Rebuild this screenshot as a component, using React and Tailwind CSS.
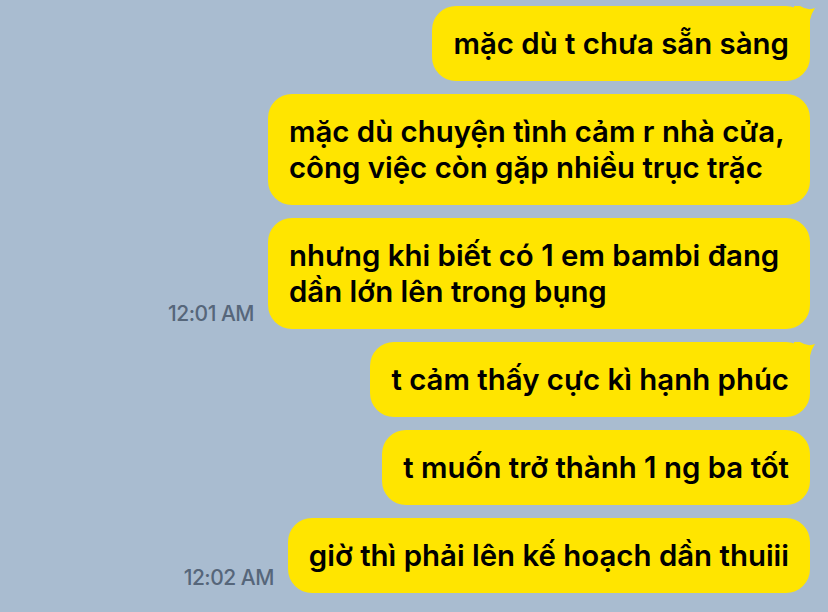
import React from "react"

const messages = [
  { lines: ["mặc dù t chưa sẵn sàng"], tail: true },
  { lines: ["mặc dù chuyện tình cảm r nhà cửa,", "công việc còn gặp nhiều trục trặc"], wide: true },
  { lines: ["nhưng khi biết có 1 em bambi đang", "dần lớn lên trong bụng"], wide: true, time: "12:01 AM" },
  { lines: ["t cảm thấy cực kì hạnh phúc"], tail: true },
  { lines: ["t muốn trở thành 1 ng ba tốt"] },
  { lines: ["giờ thì phải lên kế hoạch dần thuiii"], time: "12:02 AM" },
]

function Tail() {
  return (
    <svg className="absolute -right-[6px] top-0" width="22" height="30" viewBox="0 0 22 30">
      <path d="M0 0 L6 0 Q14 5 21 2 Q17 8 16 14 L16 30 L0 30 Z" fill="#ffe500" />
    </svg>
  )
}

function Bubble({ lines, tail, wide }) {
  return (
    <div className={`relative rounded-[24px] bg-[#ffe500] px-[21px] pt-[20px] pb-[19px] ${wide ? "w-[542px]" : ""}`}>
      {tail && <Tail />}
      <p className="relative text-[29.4px] leading-[36px] font-semibold text-black whitespace-nowrap">
        {lines.map((l, i) => (
          <span key={i} className="block">{l}</span>
        ))}
      </p>
    </div>
  )
}

export default function App() {
  return (
    <div className="w-[828px] h-[612px] overflow-hidden bg-[#a9bcd0] font-['Inter','Noto_Sans',sans-serif]">
      <div className="flex flex-col items-end gap-[13px] pt-[6px] pr-[18px]">
        {messages.map((m, i) => (
          <div key={i} className="flex items-end gap-[14px]">
            {m.time && (
              <span className="mb-[3px] text-[21px] leading-[24px] font-medium text-[#56667a] tracking-[-0.5px]">{m.time}</span>
            )}
            <Bubble {...m} />
          </div>
        ))}
      </div>
    </div>
  )
}
